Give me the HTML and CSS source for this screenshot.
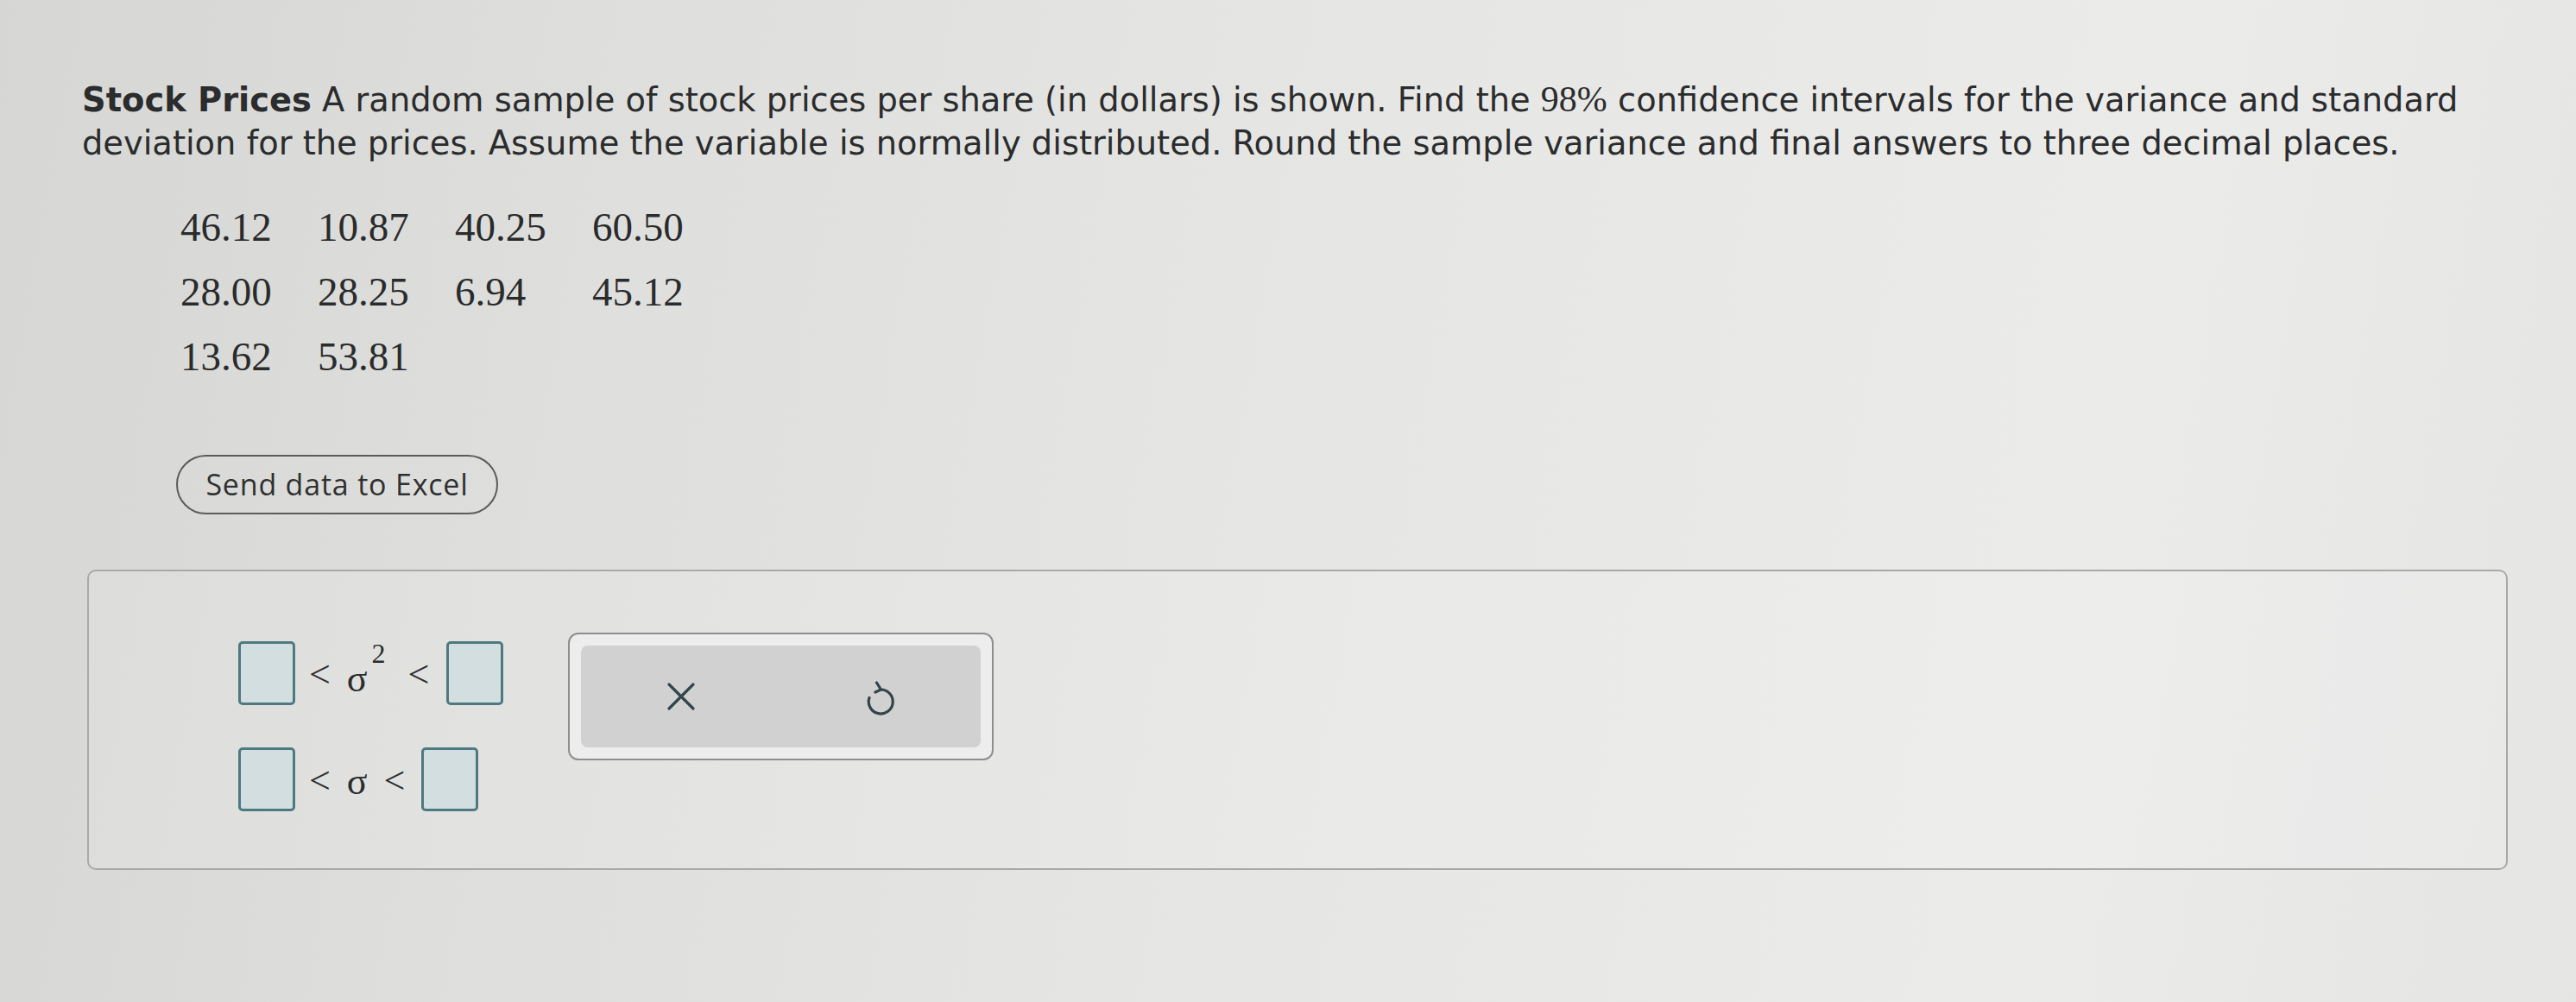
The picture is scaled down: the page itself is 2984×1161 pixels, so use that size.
FILE: index.html
```html
<!DOCTYPE html>
<html lang="en">
<head>
<meta charset="utf-8">
<title>Stock Prices</title>
<link rel="stylesheet" href="styles.css">
</head>
<body>
<main class="page">
  <p class="question"><b>Stock Prices</b> A random sample of stock prices per share (in dollars) is shown. Find the <span class="num">98%</span> confidence intervals for the variance and standard deviation for the prices. Assume the variable is normally distributed. Round the sample variance and final answers to three decimal places.</p>

  <table class="data">
    <tr><td>46.12</td><td>10.87</td><td>40.25</td><td>60.50</td></tr>
    <tr><td>28.00</td><td>28.25</td><td>6.94</td><td>45.12</td></tr>
    <tr><td>13.62</td><td>53.81</td><td></td><td></td></tr>
  </table>

  <button class="excel" type="button">Send data to Excel</button>

  <section class="answer">
    <div class="inequalities">
      <div class="ineq">
        <span class="box"></span>
        <span class="op lt1">&lt;</span>
        <span class="var">σ<sup class="sq">2</sup></span>
        <span class="op lt2">&lt;</span>
        <span class="box box-r"></span>
      </div>
      <div class="ineq">
        <span class="box"></span>
        <span class="op lt1">&lt;</span>
        <span class="var">σ</span>
        <span class="op lt3">&lt;</span>
        <span class="box box-r2"></span>
      </div>
    </div>
    <div class="keypad">
      <div class="keys">
        <button class="key" type="button" aria-label="Clear">
          <svg width="36" height="36" viewBox="0 0 36 36" aria-hidden="true">
            <path d="M4 4 L32 32 M32 4 L4 32" fill="none" stroke="#33454a" stroke-width="3.2" stroke-linecap="round"/>
          </svg>
        </button>
        <button class="key" type="button" aria-label="Undo">
          <svg width="40" height="48" viewBox="0 0 40 48" aria-hidden="true">
            <path d="M19 16 A14 14 0 1 1 6 25.5" fill="none" stroke="#33454a" stroke-width="3.2" stroke-linecap="round"/>
            <path d="M14.5 8 L19.5 16 L13 19" fill="none" stroke="#33454a" stroke-width="3.2" stroke-linecap="round" stroke-linejoin="round"/>
          </svg>
        </button>
      </div>
    </div>
  </section>
</main>
</body>
</html>
```

FILE: styles.css
```css
html, body {
  margin: 0;
  padding: 0;
}

body {
  width: 2984px;
  height: 1161px;
  overflow: hidden;
  background: linear-gradient(100deg, #d6d7d4 0%, #dfe0dd 25%, #e7e7e5 55%, #ebebea 80%, #e5e5e4 100%);
  color: #2b2c2d;
  font-family: "DejaVu Sans", Verdana, sans-serif;
}

.page {
  padding: 91px 0 0 95px;
}

.question {
  margin: 0;
  width: 2800px;
  font-size: 38.4px;
  line-height: 50px;
}

.question b {
  font-weight: bold;
}

.num {
  font-family: "Liberation Serif", "Times New Roman", serif;
  font-size: 42px;
  line-height: 40px;
}

.data {
  margin: 34px 0 0 114px;
  border-collapse: collapse;
  font-family: "Liberation Serif", "Times New Roman", serif;
  font-size: 47px;
  color: #2a2b2c;
}

.data td {
  width: 159px;
  height: 75px;
  padding: 0;
  text-align: left;
  vertical-align: middle;
}

.excel {
  display: block;
  margin: 77px 0 0 109px;
  width: 373px;
  height: 69px;
  border: 2px solid #5a5b5c;
  border-radius: 35px;
  background: transparent;
  color: #2f3031;
  font-family: "Open Sans", sans-serif;
  font-size: 34px;
  letter-spacing: 0.8px;
  padding: 0 0 2px;
}

.answer {
  margin: 64px 0 0 6px;
  width: 2804px;
  height: 348px;
  box-sizing: border-box;
  border: 2px solid #a9a9a8;
  border-radius: 10px;
  background: rgba(255, 255, 255, 0.12);
  display: flex;
  align-items: flex-start;
  gap: 75px;
  padding: 71px 0 0 173px;
}

.inequalities {
  margin-top: 10px;
  display: flex;
  flex-direction: column;
  gap: 49px;
}

.ineq {
  display: flex;
  align-items: center;
  height: 74px;
  font-family: "Liberation Serif", "Times New Roman", serif;
  font-size: 44px;
  line-height: 1;
  color: #2c2d2e;
}

.box {
  width: 66px;
  height: 74px;
  box-sizing: border-box;
  border: 3px solid #4d7a81;
  border-radius: 5px;
  background: #d2dedf;
}

.op {
  margin-top: 4px;
}

.lt1 {
  margin-left: 16px;
}

.var {
  margin-left: 19px;
  margin-top: 6px;
}

.sq {
  font-size: 32px;
  line-height: 0;
  vertical-align: 33px;
  margin-left: 5px;
}

.lt2 {
  margin-left: 26px;
}

.lt3 {
  margin-left: 19px;
}

.box-r {
  margin-left: 20px;
}

.box-r2 {
  margin-left: 19px;
}

.keypad {
  width: 493px;
  height: 148px;
  box-sizing: border-box;
  border: 2px solid #8d8e8e;
  border-radius: 12px;
  background: #ecedec;
  padding: 13px;
}

.keys {
  height: 100%;
  display: grid;
  grid-template-columns: 1fr 1fr;
  background: #d0d1d0;
  border-radius: 8px;
}

.key {
  border: 0;
  background: transparent;
  padding: 0;
  display: flex;
  align-items: center;
  justify-content: center;
}

.key svg {
  display: block;
}
```
